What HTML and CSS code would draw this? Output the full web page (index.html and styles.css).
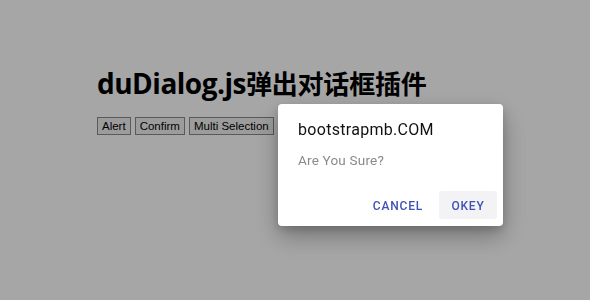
FILE: index.html
```html
<!DOCTYPE html>
<html lang="zh-CN">
<head>
    <meta charset="UTF-8">
    <meta name="viewport" content="width=device-width, initial-scale=1.0">
    <title>duDialog.js弹出对话框插件</title>
    <link rel="stylesheet" href="styles.css">
</head>
<body>
    <div class="page">
        <h1>duDialog.js<span class="cjk">弹出对话框插件</span></h1>
        <div class="demo-buttons">
            <button class="demo-btn">Alert</button>
            <button class="demo-btn">Confirm</button>
            <button class="demo-btn">Multi Selection</button>
        </div>
    </div>

    <!-- Dialog overlay -->
    <div class="du-overlay">
        <div class="du-dialog">
            <div class="du-title">bootstrapmb.COM</div>
            <div class="du-message">Are You Sure?</div>
            <div class="du-actions">
                <button class="du-btn">CANCEL</button>
                <button class="du-btn du-btn-ok">OKEY</button>
            </div>
        </div>
    </div>
</body>
</html>
```

FILE: styles.css
```css
/* Reset */
* {
    box-sizing: border-box;
    margin: 0;
    padding: 0;
}

body {
    background: #fff;
    color: #000;
    font-family: "Open Sans", "Noto Sans CJK SC", sans-serif;
}

/* Page content */
.page {
    padding: 64px 0 0 97px;
}

.page h1 {
    font-family: "Open Sans", "Noto Sans CJK SC", sans-serif;
    font-size: 28px;
    font-weight: 700;
    line-height: 38px;
    letter-spacing: -0.5px;
    margin-bottom: 15px;
}

.page h1 .cjk {
    font-family: "Noto Sans CJK SC", sans-serif;
    font-size: 26px;
    letter-spacing: -0.2px;
}

.demo-buttons {
    display: flex;
    gap: 4px;
}

.demo-btn {
    font-family: "Liberation Sans", Arial, sans-serif;
    font-size: 11.5px;
    line-height: 14px;
    padding: 1px 4px;
    background: #f0f0f0;
    border: 1px solid #8a8a8a;
    color: #000;
}

/* Overlay */
.du-overlay {
    position: fixed;
    inset: 0;
    background: rgba(0, 0, 0, 0.35);
}

.du-dialog {
    position: absolute;
    left: 278px;
    top: 104px;
    width: 225px;
    height: 122px;
    background: #fff;
    border-radius: 4px;
    box-shadow: 0 10px 24px rgba(0, 0, 0, 0.3), 0 4px 8px rgba(0, 0, 0, 0.15);
    font-family: Roboto, sans-serif;
    display: flex;
    flex-direction: column;
}

.du-title {
    font-size: 16px;
    color: #111;
    padding: 16px 20px 0;
    line-height: 20px;
    letter-spacing: 0.3px;
}

.du-message {
    font-size: 13.5px;
    color: #8a8a8a;
    padding: 10px 20px 0;
    line-height: 20px;
    letter-spacing: 0.2px;
}

.du-actions {
    margin-top: auto;
    display: flex;
    justify-content: flex-end;
    gap: 8px;
    padding: 0 6px 7px;
}

.du-btn {
    font-family: Roboto, sans-serif;
    font-size: 12px;
    font-weight: 500;
    letter-spacing: 0.8px;
    color: #3f51b5;
    background: transparent;
    border: none;
    border-radius: 3px;
    height: 28px;
    padding: 1px 8px 0 8px;
}

.du-btn-ok {
    background: #f3f3f5;
    width: 58px;
    padding: 1px 0 0;
}
```
